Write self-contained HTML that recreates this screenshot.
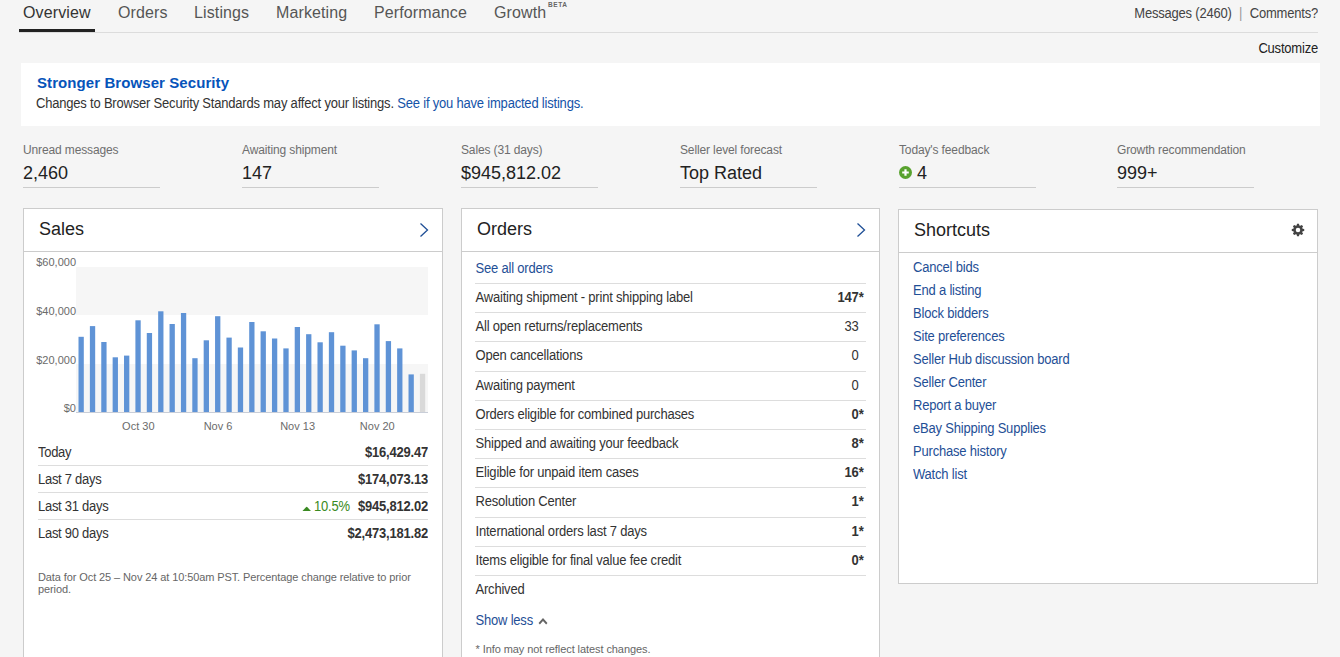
<!DOCTYPE html>
<html><head><meta charset="utf-8"><title>Seller Hub</title>
<style>
*{box-sizing:border-box;margin:0;padding:0}
html,body{width:1340px;height:657px;overflow:hidden}
body{background:#f5f5f5;font-family:"Liberation Sans",sans-serif;color:#333;position:relative}
.abs{position:absolute;white-space:nowrap}
.nav{font-size:16px;color:#555;top:3px;line-height:20px;letter-spacing:0.12px;transform:scaleY(1.08);transform-origin:0 15px}
.navline{left:19px;top:32px;width:1299px;height:1px;background:#dcdcdc}
.navsel{left:19px;top:29px;width:76px;height:3px;background:#222}
.topr{font-size:13px;color:#444;line-height:16px;letter-spacing:-0.2px;transform:scaleY(1.1);transform-origin:0 12px}
.banner{left:21px;top:63px;width:1299px;height:63px;background:#fff}
.stat-l{font-size:12px;color:#6e6e6e;line-height:14px;top:143px;letter-spacing:-0.13px}
.stat-v{font-size:18px;color:#222;line-height:20px;top:163px}
.stat-u{top:187px;width:137px;height:1px;background:#ccc}
.card{background:#fff;border:1px solid #ccc}
.card h2{font-weight:normal;font-size:18px;color:#222;position:absolute;left:15px;top:10px;line-height:20px}
.card .hline{position:absolute;left:0;right:0;top:42px;height:1px;background:#ccc}
.srow2{position:absolute;left:14px;right:14px;height:27px;border-bottom:1px solid #ddd;font-size:13px;line-height:16px;color:#333;letter-spacing:-0.2px}
.srow2 span{position:absolute;left:0;top:6px;letter-spacing:-0.28px;transform:scaleY(1.1);transform-origin:0 12px}
.srow2 b{position:absolute;right:0;top:6px;color:#333;transform:scaleY(1.1);transform-origin:0 12px}
.orow{position:relative;height:29.2px;border-top:1px solid #ddd;font-size:13px;line-height:16px;color:#333;letter-spacing:-0.2px}
.orow span{position:absolute;left:0.5px;top:6px;transform:scaleY(1.1);transform-origin:0 12px}
.orow b{position:absolute;right:2.5px;top:6px;color:#333;transform:scaleY(1.1);transform-origin:0 12px}
.orow b u{text-decoration:none;font-weight:normal}
.orow b i{visibility:hidden;font-style:normal}
.srow{font-size:13px;line-height:23px;color:#1f4f96;height:23px;letter-spacing:-0.2px;transform:scaleY(1.1);transform-origin:0 16px}
a,.lnk{color:#1f4f96}
</style></head><body>

<!-- nav -->
<div class="abs nav" style="left:23px;color:#333">Overview</div>
<div class="abs nav" style="left:118px">Orders</div>
<div class="abs nav" style="left:194px">Listings</div>
<div class="abs nav" style="left:276px">Marketing</div>
<div class="abs nav" style="left:374px">Performance</div>
<div class="abs nav" style="left:494px">Growth</div>
<div class="abs" style="left:548px;top:1px;font-size:6.5px;font-weight:bold;line-height:8px;color:#666;letter-spacing:.6px">BETA</div>
<div class="abs navline"></div>
<div class="abs navsel"></div>
<div class="abs topr" style="right:22px;top:6px">Messages (2460) <span style="color:#999;padding:0 4px">|</span> Comments?</div>
<div class="abs topr" style="right:22px;top:41px;color:#222">Customize</div>

<!-- banner -->
<div class="abs banner"></div>
<div class="abs" style="left:37px;top:74px;font-size:15px;font-weight:bold;color:#0654ba;line-height:18px;letter-spacing:0.08px">Stronger Browser Security</div>
<div class="abs" style="left:36px;top:96px;font-size:13px;color:#333;line-height:16px;letter-spacing:-0.2px;transform:scaleY(1.1);transform-origin:0 12px">Changes to Browser Security Standards may affect your listings. <span class="lnk" style="color:#1453a8">See if you have impacted listings.</span></div>

<!-- stats -->
<div class="abs stat-l" style="left:23px">Unread messages</div>
<div class="abs stat-v" style="left:23px">2,460</div>
<div class="abs stat-u" style="left:23.3px"></div>
<div class="abs stat-l" style="left:242px">Awaiting shipment</div>
<div class="abs stat-v" style="left:242px">147</div>
<div class="abs stat-u" style="left:242.1px"></div>
<div class="abs stat-l" style="left:461px">Sales (31 days)</div>
<div class="abs stat-v" style="left:461px">$945,812.02</div>
<div class="abs stat-u" style="left:460.9px"></div>
<div class="abs stat-l" style="left:680px">Seller level forecast</div>
<div class="abs stat-v" style="left:680px">Top Rated</div>
<div class="abs stat-u" style="left:679.7px"></div>
<div class="abs stat-l" style="left:899px">Today's feedback</div>
<div class="abs stat-v" style="left:917px">4</div>
<svg class="abs" style="left:899px;top:166px" width="13" height="13" viewBox="0 0 13 13"><circle cx="6.5" cy="6.5" r="6.5" fill="#58a22e"/><path d="M6.5 3.2v6.6M3.2 6.5h6.6" stroke="#fff" stroke-width="2.2"/></svg>
<div class="abs stat-u" style="left:898.5px"></div>
<div class="abs stat-l" style="left:1117px">Growth recommendation</div>
<div class="abs stat-v" style="left:1117px">999+</div>
<div class="abs stat-u" style="left:1117.3px"></div>

<!-- Sales card -->
<div class="abs card" style="left:23px;top:208px;width:420px;height:460px">
  <h2>Sales</h2>
  <svg style="position:absolute;left:394px;top:13px" width="12" height="16" viewBox="0 0 12 16"><path d="M2.5 1.5L9.5 8L2.5 14.5" fill="none" stroke="#1f4f96" stroke-width="1.3"/></svg>
  <div class="hline"></div>
</div>
<svg class="abs" style="left:0;top:0" width="460" height="440" viewBox="0 0 460 440">
  <rect x="76" y="267" width="352" height="48" fill="#f6f6f6"/>
  <rect x="76" y="364" width="352" height="48" fill="#f6f6f6"/>
  <rect x="78.50" y="336.8" width="5.3" height="75.2" fill="#5f93d6"/>
<rect x="89.88" y="326.1" width="5.3" height="85.9" fill="#5f93d6"/>
<rect x="101.26" y="342.0" width="5.3" height="70.0" fill="#5f93d6"/>
<rect x="112.64" y="357.3" width="5.3" height="54.7" fill="#5f93d6"/>
<rect x="124.02" y="355.6" width="5.3" height="56.4" fill="#5f93d6"/>
<rect x="135.40" y="320.3" width="5.3" height="91.7" fill="#5f93d6"/>
<rect x="146.78" y="333.0" width="5.3" height="79.0" fill="#5f93d6"/>
<rect x="158.16" y="311.3" width="5.3" height="100.7" fill="#5f93d6"/>
<rect x="169.54" y="324.0" width="5.3" height="88.0" fill="#5f93d6"/>
<rect x="180.92" y="313.0" width="5.3" height="99.0" fill="#5f93d6"/>
<rect x="192.30" y="358.2" width="5.3" height="53.8" fill="#5f93d6"/>
<rect x="203.68" y="340.3" width="5.3" height="71.7" fill="#5f93d6"/>
<rect x="215.06" y="316.2" width="5.3" height="95.8" fill="#5f93d6"/>
<rect x="226.44" y="337.6" width="5.3" height="74.4" fill="#5f93d6"/>
<rect x="237.82" y="347.5" width="5.3" height="64.5" fill="#5f93d6"/>
<rect x="249.20" y="322.0" width="5.3" height="90.0" fill="#5f93d6"/>
<rect x="260.58" y="331.3" width="5.3" height="80.7" fill="#5f93d6"/>
<rect x="271.96" y="338.5" width="5.3" height="73.5" fill="#5f93d6"/>
<rect x="283.34" y="348.4" width="5.3" height="63.6" fill="#5f93d6"/>
<rect x="294.72" y="327.0" width="5.3" height="85.0" fill="#5f93d6"/>
<rect x="306.10" y="334.2" width="5.3" height="77.8" fill="#5f93d6"/>
<rect x="317.48" y="342.3" width="5.3" height="69.7" fill="#5f93d6"/>
<rect x="328.86" y="332.2" width="5.3" height="79.8" fill="#5f93d6"/>
<rect x="340.24" y="345.7" width="5.3" height="66.3" fill="#5f93d6"/>
<rect x="351.62" y="350.4" width="5.3" height="61.6" fill="#5f93d6"/>
<rect x="363.00" y="358.2" width="5.3" height="53.8" fill="#5f93d6"/>
<rect x="374.38" y="324.3" width="5.3" height="87.7" fill="#5f93d6"/>
<rect x="385.76" y="341.1" width="5.3" height="70.9" fill="#5f93d6"/>
<rect x="397.14" y="348.4" width="5.3" height="63.6" fill="#5f93d6"/>
<rect x="408.52" y="374.4" width="5.3" height="37.6" fill="#5f93d6"/>
<rect x="419.90" y="373.8" width="5.3" height="38.2" fill="#d9d9d9"/>
  <rect x="76" y="412" width="352" height="1" fill="#c9ced8"/>
  <g font-family="Liberation Sans, sans-serif" font-size="11" fill="#6b6b6b">
    <text x="76" y="266" text-anchor="end">$60,000</text>
    <text x="76" y="315" text-anchor="end">$40,000</text>
    <text x="76" y="364" text-anchor="end">$20,000</text>
    <text x="76" y="412" text-anchor="end">$0</text>
    <text x="138.3" y="430" text-anchor="middle">Oct 30</text>
    <text x="218" y="430" text-anchor="middle">Nov 6</text>
    <text x="297.6" y="430" text-anchor="middle">Nov 13</text>
    <text x="377.3" y="430" text-anchor="middle">Nov 20</text>
  </g>
</svg>
<div class="abs" style="left:38px;top:439px;width:390px;height:120px">
  <div class="srow2" style="left:0;right:0;top:0"><span>Today</span><b>$16,429.47</b></div>
  <div class="srow2" style="left:0;right:0;top:27px"><span>Last 7 days</span><b>$174,073.13</b></div>
  <div class="srow2" style="left:0;right:0;top:54px"><span>Last 31 days</span><b><i style="font-style:normal;font-weight:normal;color:#3a8a22;margin-right:8px"><svg width="9.4" height="4.4" viewBox="0 0 9 5" preserveAspectRatio="none" style="margin-right:3px;position:relative;top:0px"><path d="M0 5L4.5 0L9 5Z" fill="#3a8a22"/></svg>10.5%</i>$945,812.02</b></div>
  <div class="srow2" style="left:0;right:0;top:81px;border-bottom:none"><span>Last 90 days</span><b>$2,473,181.82</b></div>
</div>
<div class="abs" style="left:38px;top:571px;width:385px;white-space:normal;font-size:11px;line-height:12px;color:#666;letter-spacing:-0.1px">Data for Oct 25 – Nov 24 at 10:50am PST. Percentage change relative to prior period.</div>

<!-- Orders card -->
<div class="abs card" style="left:461px;top:208px;width:419px;height:460px">
  <h2>Orders</h2>
  <svg style="position:absolute;left:393.2px;top:13px" width="12" height="16" viewBox="0 0 12 16"><path d="M2.5 1.5L9.5 8L2.5 14.5" fill="none" stroke="#1f4f96" stroke-width="1.3"/></svg>
  <div class="hline"></div>
  <div style="position:absolute;left:13.5px;top:52px;font-size:13px;line-height:16px;letter-spacing:-0.2px;transform:scaleY(1.1);transform-origin:0 12px" class="lnk">See all orders</div>
  <div style="position:absolute;left:13px;width:391px;top:74px"><div class="orow"><span>Awaiting shipment - print shipping label</span><b>147*</b></div><div class="orow"><span>All open returns/replacements</span><b><u>33</u><i>*</i></b></div><div class="orow"><span>Open cancellations</span><b><u>0</u><i>*</i></b></div><div class="orow"><span>Awaiting payment</span><b><u>0</u><i>*</i></b></div><div class="orow"><span>Orders eligible for combined purchases</span><b>0*</b></div><div class="orow"><span>Shipped and awaiting your feedback</span><b>8*</b></div><div class="orow"><span>Eligible for unpaid item cases</span><b>16*</b></div><div class="orow"><span>Resolution Center</span><b>1*</b></div><div class="orow"><span>International orders last 7 days</span><b>1*</b></div><div class="orow"><span>Items eligible for final value fee credit</span><b>0*</b></div><div class="orow"><span>Archived</span><b></b></div></div>
  <div style="position:absolute;left:13.5px;top:404px;font-size:13px;line-height:16px;letter-spacing:-0.2px;transform:scaleY(1.1);transform-origin:0 12px" class="lnk">Show less <svg width="10" height="7" viewBox="0 0 10 7" style="margin-left:2px;vertical-align:0.5px"><path d="M1.2 5.8L5 2L8.8 5.8" fill="none" stroke="#666" stroke-width="1.9"/></svg></div>
  <div style="position:absolute;left:13.5px;top:434px;font-size:11px;line-height:13px;color:#666;letter-spacing:-0.08px">* Info may not reflect latest changes.</div>
</div>

<!-- Shortcuts card -->
<div class="abs card" style="left:898px;top:209px;width:420px;height:375px">
  <h2>Shortcuts</h2>
  <svg style="position:absolute;left:392.4px;top:12.8px" width="14" height="14" viewBox="0 0 14 14"><path fill-rule="evenodd" fill="#444" d="M5.66 2.39 L6.01 0.78 L7.99 0.78 L8.34 2.39 L9.31 2.79 L10.70 1.90 L12.10 3.30 L11.21 4.69 L11.61 5.66 L13.22 6.01 L13.22 7.99 L11.61 8.34 L11.21 9.31 L12.10 10.70 L10.70 12.10 L9.31 11.21 L8.34 11.61 L7.99 13.22 L6.01 13.22 L5.66 11.61 L4.69 11.21 L3.30 12.10 L1.90 10.70 L2.79 9.31 L2.39 8.34 L0.78 7.99 L0.78 6.01 L2.39 5.66 L2.79 4.69 L1.90 3.30 L3.30 1.90 L4.69 2.79Z M9.25 7.00 A2.25 2.25 0 1 0 4.75 7.00 A2.25 2.25 0 1 0 9.25 7.00Z"/></svg>
  <div class="hline" style="top:42px"></div>
  <div style="position:absolute;left:14px;top:46px"><div class="srow">Cancel bids</div><div class="srow">End a listing</div><div class="srow">Block bidders</div><div class="srow">Site preferences</div><div class="srow">Seller Hub discussion board</div><div class="srow">Seller Center</div><div class="srow">Report a buyer</div><div class="srow">eBay Shipping Supplies</div><div class="srow">Purchase history</div><div class="srow">Watch list</div></div>
</div>

</body></html>
